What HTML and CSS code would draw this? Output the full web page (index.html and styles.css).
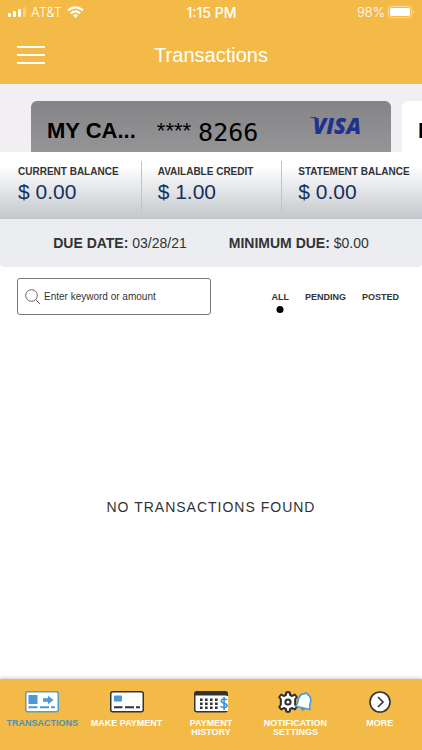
FILE: index.html
```html
<!DOCTYPE html>
<html lang="en">
<head>
    <meta charset="UTF-8" />
    <meta name="viewport" content="width=device-width, initial-scale=1" />
    <title>Transactions</title>
    <link rel="stylesheet" href="styles.css">
</head>
<body>
    <header class="header">
        <div class="status-bar">
            <div class="status-left">
                <svg width="18" height="10" viewBox="0 0 18 10" fill="#fff">
                    <rect x="0" y="6" width="3" height="4" rx="1" />
                    <rect x="5" y="4" width="3" height="6" rx="1" />
                    <rect x="10" y="2" width="3" height="8" rx="1" />
                    <rect x="15" y="0" width="3" height="10" rx="1" opacity="0.3" />
                </svg>
                <span class="carrier">AT&amp;T</span>
                <svg width="17" height="12" viewBox="0 0 17 12" fill="none" stroke="#fff" stroke-width="2.2">
                    <path d="M1 4.6C5.2 0.2 11.8 0.2 16 4.6" />
                    <path d="M3.8 7.4C6.5 4.6 10.5 4.6 13.2 7.4" />
                    <path d="M8.5 12L5.9 9.3C7.4 7.9 9.6 7.9 11.1 9.3Z" fill="#fff" stroke="none" />
                </svg>
            </div>
            <div class="clock">1:15 PM</div>
            <div class="status-right">
                <span>98%</span>
                <svg width="27" height="12" viewBox="0 0 27 12">
                    <rect x="0.5" y="0.5" width="23" height="11" rx="3" fill="none" stroke="#fff" opacity="0.5" />
                    <rect x="2" y="2" width="20" height="8" rx="1.5" fill="#fff" />
                    <path d="M25 4Q27 6 25 8Z" fill="#fff" opacity="0.5" />
                </svg>
            </div>
        </div>
        <div class="title-bar">
            <button class="menu-button" aria-label="Menu">
                <span></span>
                <span></span>
                <span></span>
            </button>
            <h1>Transactions</h1>
        </div>
    </header>

    <main>
        <section class="cards">
            <div class="card">
                <span class="card-name">MY CA...</span>
                <span class="card-stars">****</span>
                <span class="card-number">8266</span>
                <span class="card-brand">
                    <svg width="8" height="4" viewBox="0 0 8 4" fill="#2b3a86"><path d="M0 0H6L8 4Q5 1 0 0.6Z" /></svg>
                    VISA
                </span>
            </div>
            <div class="card card-next">
                <span class="card-name">MY CA...</span>
            </div>
        </section>

        <section class="balances">
            <div class="balance">
                <h2>CURRENT BALANCE</h2>
                <p>$ 0.00</p>
            </div>
            <div class="balance">
                <h2>AVAILABLE CREDIT</h2>
                <p>$ 1.00</p>
            </div>
            <div class="balance">
                <h2>STATEMENT BALANCE</h2>
                <p>$ 0.00</p>
            </div>
        </section>

        <section class="due">
            <div><strong>DUE DATE:</strong> 03/28/21</div>
            <div><strong>MINIMUM DUE:</strong> $0.00</div>
        </section>

        <section class="filters">
            <label class="search">
                <svg width="16" height="16" viewBox="0 0 16 16" fill="none" stroke="#666" stroke-width="1">
                    <circle cx="6.5" cy="6.5" r="5.8" />
                    <path d="M10.8 10.8L15 15" />
                </svg>
                <input type="text" placeholder="Enter keyword or amount" aria-label="Enter keyword or amount" />
            </label>
            <div class="tabs">
                <button class="tab active">ALL</button>
                <button class="tab">PENDING</button>
                <button class="tab">POSTED</button>
            </div>
        </section>

        <p class="empty">NO TRANSACTIONS FOUND</p>
    </main>

    <nav class="bottom-nav">
        <a href="#" class="nav-item active">
            <svg width="34" height="22" viewBox="0 0 34 22">
                <rect x="0.75" y="0.75" width="32.5" height="20" rx="2" fill="#fff" stroke="#5b9fb5" stroke-width="1.5" />
                <rect x="3.5" y="4" width="9" height="9" rx="0.5" fill="#4a98d8" />
                <path d="M18 7.3H23V4.8L28.5 9L23 13.2V10.7H18Z" fill="#4a98d8" />
                <path d="M3.5 16.2H12.5M15 16.2H24M26 16.2H30" stroke="#4a98d8" stroke-width="2" />
            </svg>
            <span>TRANSACTIONS</span>
        </a>
        <a href="#" class="nav-item">
            <svg width="34" height="22" viewBox="0 0 34 22">
                <rect x="0.75" y="0.75" width="32.5" height="20" rx="2" fill="#fff" stroke="#333" stroke-width="1.5" />
                <rect x="4" y="4.5" width="8" height="6" rx="0.5" fill="#4a98d8" />
                <path d="M4 16.2H12.5M15 16.2H24M26 16.2H30" stroke="#333" stroke-width="2" />
            </svg>
            <span>MAKE PAYMENT</span>
        </a>
        <a href="#" class="nav-item">
            <svg width="34" height="22" viewBox="0 0 34 22">
                <rect x="0.75" y="0.75" width="32.5" height="20" rx="2" fill="#fff" stroke="#333" stroke-width="1.5" />
                <path d="M1 1H33V4.5H1Z" fill="#333" />
                <path d="M6 8.7H25M6 12.7H25M6 16.7H25" stroke="#333" stroke-width="2.4" stroke-dasharray="2.6 2.4" />
                <path d="M26 5H34V20H26Z" fill="#fff" />
                <path d="M33 9.2C32.2 7.6 27.3 7.4 27.3 10C27.3 12.8 33 11.6 33 14.5C33 17.2 27.5 17 26.8 15M30.1 6V19" fill="none" stroke="#3f93dc" stroke-width="1.7" />
            </svg>
            <span>PAYMENT<br>HISTORY</span>
        </a>
        <a href="#" class="nav-item">
            <svg width="34" height="22" viewBox="0 0 34 22">
                <path d="M8.4 1.2H11.6L12.2 4L14.3 5L16.8 3.5L18.8 6L17.2 8.3V13.7L18.8 16L16.8 18.5L14.3 17L12.2 18L11.6 20.8H8.4L7.8 18L5.7 17L3.2 18.5L1.2 16L2.8 13.7V8.3L1.2 6L3.2 3.5L5.7 5L7.8 4Z" fill="#fff" stroke="#2d2d2d" stroke-width="2" stroke-linejoin="round" />
                <circle cx="10" cy="11" r="2.6" fill="#fff" stroke="#2d2d2d" stroke-width="2" />
                <g transform="rotate(12 26 11)">
                    <path d="M18.5 17C20.4 15.5 19.8 13 20 9.5C20.2 6 22 3.5 24.8 3C25 1 27.5 1 27.7 3C30.5 3.5 32.2 6 32.4 9.5C32.6 13 32 15.5 33.6 17Z" fill="#fff" stroke="#4a98d8" stroke-width="1.6" stroke-linejoin="round" />
                    <path d="M23.5 17.5H29Q26.3 22 23.5 17.5Z" fill="#4a98d8" />
                </g>
            </svg>
            <span>NOTIFICATION<br>SETTINGS</span>
        </a>
        <a href="#" class="nav-item">
            <svg width="22" height="22" viewBox="0 0 22 22" fill="none" stroke="#333" stroke-width="1.6">
                <circle cx="11" cy="11" r="10" fill="#fff" />
                <path d="M9 6L14 11L9 16" />
            </svg>
            <span>MORE</span>
        </a>
    </nav>
</body>
</html>
```
FILE: styles.css
```css
* { box-sizing: border-box; }

body {
    margin: 0;
    min-height: 100vh;
    display: flex;
    flex-direction: column;
    background: #fff;
    color: #333;
    font-family: "Liberation Sans", Arial, sans-serif;
}

h1, h2, p { margin: 0; }

button {
    border: none;
    padding: 0;
    background: none;
    color: inherit;
    font-family: inherit;
    cursor: pointer;
}

.header {
    background: #f4ba48;
    color: #fff;
}

.status-bar {
    display: grid;
    grid-template-columns: 1fr auto 1fr;
    align-items: center;
    height: 24px;
    padding: 0 7px 0 8px;
    font-family: Inter, "Liberation Sans", sans-serif;
    font-size: 13px;
    font-weight: 300;
}
.status-left {
    display: flex;
    align-items: center;
    gap: 5px;
}
.status-right {
    display: flex;
    align-items: center;
    justify-content: flex-end;
    gap: 3px;
}
.clock {
    font-size: 14px;
    font-weight: 500;
}

.title-bar {
    display: grid;
    grid-template-columns: 28px 1fr 28px;
    align-items: center;
    height: 60px;
    padding: 2px 17px 0;
}
.title-bar h1 {
    font-size: 20px;
    font-weight: 400;
    text-align: center;
}

.menu-button {
    display: flex;
    flex-direction: column;
    gap: 6px;
}
.menu-button span {
    height: 2px;
    width: 28px;
    background: #fff;
}

.cards {
    display: flex;
    gap: 11px;
    padding: 17px 0 0 31px;
    background: #f1eff1;
    overflow: hidden;
}
.card {
    flex: 0 0 calc(100% - 31px);
    display: flex;
    align-items: center;
    height: 51px;
    padding: 8px 30px 0 16px;
    border-radius: 6px 6px 0 0;
    background: linear-gradient(#858587, #959497);
    color: #000;
    white-space: nowrap;
}
.card-next { background: #fff; }
.card-name {
    font-size: 22px;
    font-weight: bold;
}
.card-stars {
    margin-left: 21px;
    font-size: 22px;
}
.card-number {
    margin-left: 7px;
    padding-top: 4px;
    font-family: "DejaVu Sans Mono", monospace;
    font-size: 25px;
}
.card-brand {
    position: relative;
    margin: 0 0 12px auto;
    font-family: "Open Sans", sans-serif;
    font-size: 22px;
    font-style: italic;
    font-weight: 800;
    color: #22318c;
}
.card-brand svg {
    position: absolute;
    top: 7px;
    left: -3px;
}

.balances {
    display: grid;
    grid-template-columns: repeat(3, 1fr);
    padding: 9px 0 8px;
    background: linear-gradient(#fff 20%, #c3c7cb);
}
.balance {
    padding: 4px 0 6px 18px;
    white-space: nowrap;
}
.balance + .balance {
    padding-left: 16px;
    border-left: 1px solid #c2c4c8;
}
.balance h2 {
    font-size: 10px;
    line-height: 14px;
}
.balance p {
    color: #15305f;
    font-size: 21px;
    line-height: 26px;
}

.due {
    display: flex;
    justify-content: center;
    gap: 42px;
    padding: 16px 0;
    border-radius: 0 0 4px 4px;
    background: #ecedf0;
    font-size: 14px;
    line-height: 16px;
}

.filters {
    display: flex;
    align-items: center;
    justify-content: space-between;
    padding: 11px 23px 0 17px;
}
.search {
    display: flex;
    align-items: center;
    gap: 3px;
    width: 194px;
    height: 37px;
    padding: 0 7px;
    border: 1px solid #777;
    border-radius: 3px;
}
.search input {
    flex: 1;
    min-width: 0;
    padding: 0;
    border: none;
    outline: none;
    background: none;
    font-family: inherit;
    font-size: 10px;
}
.search input::placeholder { color: #333; }

.tabs {
    display: flex;
    gap: 16px;
}
.tab {
    position: relative;
    font-size: 9px;
    font-weight: bold;
    line-height: 12px;
}
.tab.active::after {
    content: "";
    position: absolute;
    top: 15px;
    left: 50%;
    width: 7px;
    height: 7px;
    border-radius: 50%;
    background: #000;
    transform: translateX(-50%);
}

main {
    flex: 1;
    display: flex;
    flex-direction: column;
}
.empty {
    margin: auto;
    padding-top: 20px;
    font-size: 14px;
    letter-spacing: 1px;
}

.bottom-nav {
    display: grid;
    grid-template-columns: repeat(5, 1fr);
    padding: 12px 0 13px;
    background: #f4ba48;
    box-shadow: 0 -1px 4px rgba(0, 0, 0, 0.2);
}
.nav-item {
    display: flex;
    flex-direction: column;
    align-items: center;
    gap: 6px;
    color: #fff;
    font-size: 9px;
    font-weight: bold;
    line-height: 9px;
    text-align: center;
    text-decoration: none;
}
.nav-item.active { color: #4e93a8; }
```
